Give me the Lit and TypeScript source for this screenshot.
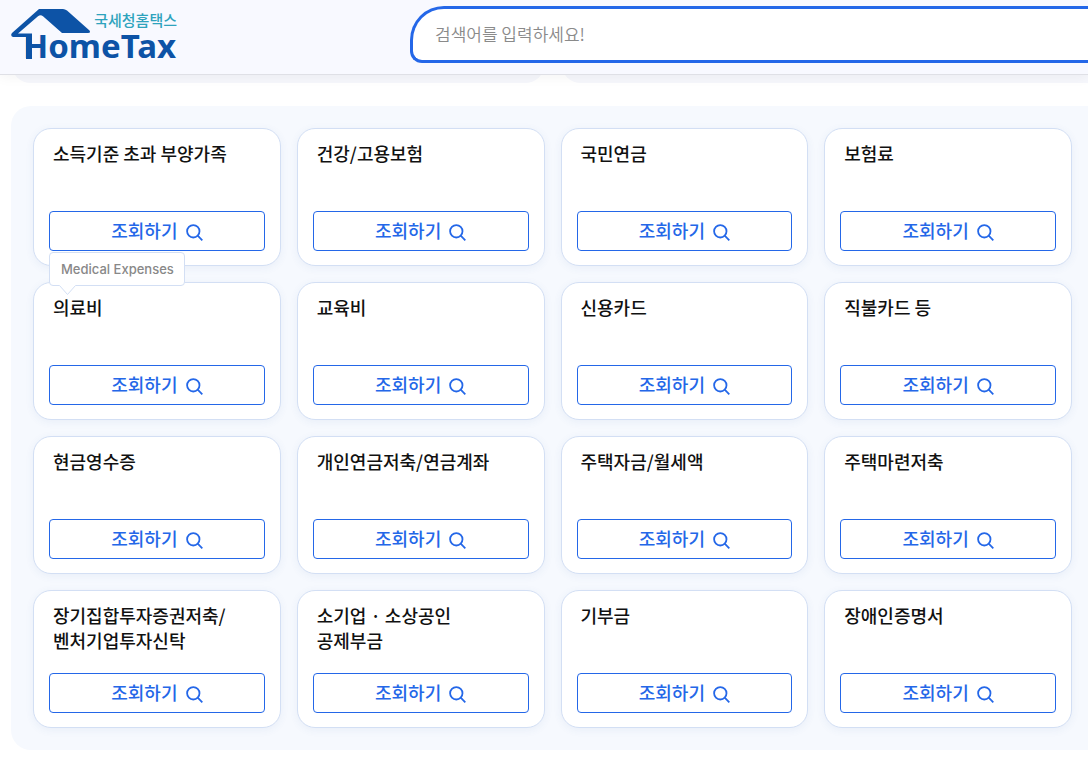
import { LitElement, html, css } from "lit";
import { customElement, property } from "lit/decorators.js";

interface Item {
  lines: string[];
  tip?: string;
}

const ITEMS: Item[] = [
  { lines: ["소득기준 초과 부양가족"] },
  { lines: ["건강/고용보험"] },
  { lines: ["국민연금"] },
  { lines: ["보험료"] },
  { lines: ["의료비"], tip: "Medical Expenses" },
  { lines: ["교육비"] },
  { lines: ["신용카드"] },
  { lines: ["직불카드 등"] },
  { lines: ["현금영수증"] },
  { lines: ["개인연금저축/연금계좌"] },
  { lines: ["주택자금/월세액"] },
  { lines: ["주택마련저축"] },
  { lines: ["장기집합투자증권저축/", "벤처기업투자신탁"] },
  { lines: ["소기업 · 소상공인", "공제부금"] },
  { lines: ["기부금"] },
  { lines: ["장애인증명서"] },
];

@customElement("site-header")
class SiteHeader extends LitElement {
  static styles = css`
    :host {
      display: block;
      position: relative;
      z-index: 2;
    }
    .bar {
      box-sizing: border-box;
      display: grid;
      grid-template-columns: 399px 1fr;
      height: 75px;
      padding: 6px 0 0 11px;
      background: #f8f9ff;
      border-bottom: 1px solid #dfe0e6;
      box-shadow: 0 2px 12px rgba(0, 0, 0, 0.05);
    }
    .logo {
      position: relative;
      display: block;
      width: 168px;
      height: 56px;
      text-decoration: none;
    }
    .roof {
      position: absolute;
      left: 0;
      top: 2px;
    }
    .ko {
      position: absolute;
      right: 2px;
      top: 4px;
      font-size: 15px;
      line-height: 20px;
      font-weight: 500;
      color: #2ea3bd;
      white-space: nowrap;
    }
    .en {
      position: absolute;
      left: 12px;
      top: 26px;
      font: 700 33px/28px "Noto Sans", sans-serif;
      color: #0d53a6;
    }
    .search {
      box-sizing: border-box;
      width: 100%;
      height: 57px;
      padding: 0 22px 2px;
      border: 3px solid #2467e8;
      border-right: 0;
      border-radius: 34px 0 0 12px;
      background: #fff;
      font-family: inherit;
      font-size: 17px;
      font-weight: 350;
      color: #333;
      outline: 0;
    }
    .search::placeholder {
      color: #8a8a8a;
      opacity: 1;
    }
  `;

  render() {
    return html`<header class="bar">
      <a class="logo" href="#" aria-label="국세청홈택스 HomeTax">
        <svg class="roof" width="80" height="52" viewBox="0 0 80 52" aria-hidden="true">
          <path
            fill="#0d53a6"
            d="M28 1H52Q54 1 56 2.500L78.500 22.500Q80 25 77 25H51L32 8.300Q29.500 6 27 8.300L7 25.500H21V51H15V29H2Q-1 28 1 25Z"
          />
        </svg>
        <span class="ko">국세청홈택스</span>
        <span class="en">HomeTax</span>
      </a>
      <input class="search" type="text" aria-label="검색어" placeholder="검색어를 입력하세요!" />
    </header>`;
  }
}

@customElement("deduction-card")
class DeductionCard extends LitElement {
  @property({ attribute: false }) item: Item = { lines: [] };

  static styles = css`
    :host {
      display: block;
      min-width: 0;
    }
    .card {
      position: relative;
      box-sizing: border-box;
      display: flex;
      flex-direction: column;
      justify-content: space-between;
      height: 100%;
      min-height: 138px;
      padding: 12px 15px 14px;
      background: #fff;
      border: 1px solid #d3dff4;
      border-radius: 18px;
      box-shadow: 0 2px 8px rgba(60, 100, 170, 0.07);
    }
    .title {
      margin: 0 4px;
      font-size: 18px;
      line-height: 25px;
      font-weight: 500;
      color: #111;
    }
    .line {
      display: block;
    }
    .go {
      box-sizing: border-box;
      display: flex;
      align-items: center;
      justify-content: center;
      gap: 8px;
      width: 100%;
      height: 40px;
      padding: 0 0 2px;
      border: 1px solid #2467e8;
      border-radius: 4px;
      background: #fff;
      font-family: inherit;
      font-size: 18px;
      line-height: 26px;
      font-weight: 500;
      color: #2467e8;
      cursor: pointer;
    }
    .lens {
      margin-top: 4px;
    }
    .tip {
      position: absolute;
      left: 15px;
      top: -31px;
      box-sizing: border-box;
      height: 34px;
      padding: 0 10px 0 11px;
      border: 1px solid #d3dff4;
      border-radius: 4px;
      background: #fff;
      font: 500 13px/32px Inter, sans-serif;
      color: #888;
      white-space: nowrap;
    }
    .arrow {
      position: absolute;
      left: 9px;
      top: 31px;
    }
  `;

  render() {
    const { lines, tip } = this.item;
    return html`<article class="card">
      ${tip
        ? html`<div class="tip" role="tooltip">
            ${tip}<svg class="arrow" width="17" height="12" viewBox="0 0 17 12" aria-hidden="true">
              <path d="M0.500 1.500L8.500 10.500L16.500 1.500V0H0.500Z" fill="#fff" />
              <path d="M0.500 1.500L8.500 10.500L16.500 1.500" fill="none" stroke="#d3dff4" />
            </svg>
          </div>`
        : null}
      <h3 class="title">${lines.map((l) => html`<span class="line">${l}</span>`)}</h3>
      <button class="go" type="button">
        조회하기
        <svg class="lens" width="17" height="17" viewBox="0 0 17 17" fill="none" stroke="currentColor" stroke-width="1.8" aria-hidden="true">
          <circle cx="7.300" cy="7.300" r="6.200" />
          <path d="M11.700 11.700L16.300 16.300" />
        </svg>
      </button>
    </article>`;
  }
}

@customElement("app-root")
class AppRoot extends LitElement {
  static styles = css`
    :host {
      display: block;
      min-height: 100vh;
      overflow: hidden;
      background: #fff;
      font-family: "Noto Sans CJK KR", sans-serif;
    }
    .above {
      display: grid;
      grid-template-columns: 534px 1fr;
      gap: 16px;
      margin-top: -20px;
      padding-left: 11px;
    }
    .edge {
      height: 28px;
      background: #f6f7fc;
      border-radius: 0 0 20px 20px;
    }
    .edge.last {
      border-bottom-right-radius: 0;
    }
    .panel {
      display: grid;
      grid-template-columns: repeat(4, minmax(0, 1fr));
      gap: 16px;
      margin: 23px 0 8px 11px;
      padding: 22px 16px 22px 22px;
      background: #f6f9fe;
      border-radius: 20px 0 0 20px;
    }
  `;

  render() {
    return html`
      <site-header></site-header>
      <div class="above">
        <div class="edge"></div>
        <div class="edge last"></div>
      </div>
      <main class="panel">
        ${ITEMS.map((item) => html`<deduction-card .item=${item}></deduction-card>`)}
      </main>
    `;
  }
}
